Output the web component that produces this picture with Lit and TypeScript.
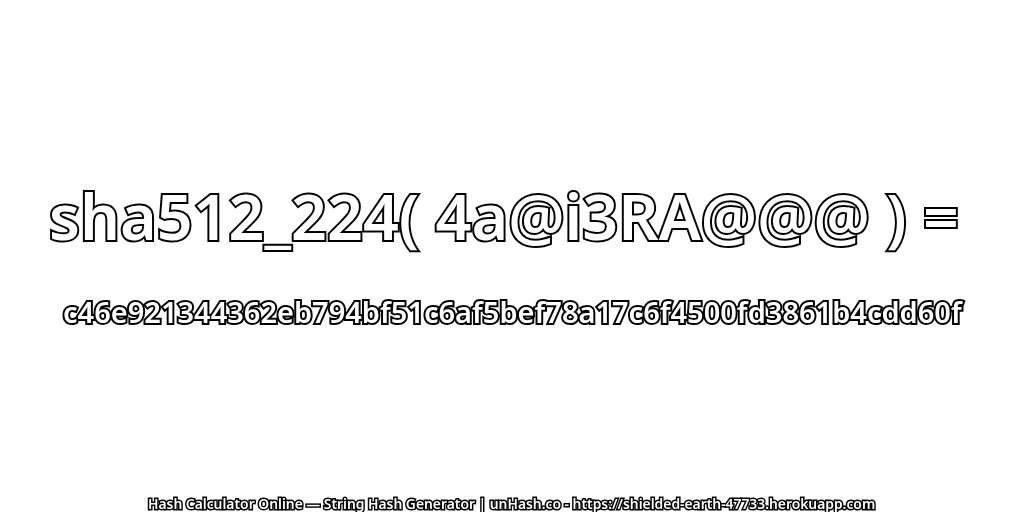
import { LitElement, html, css } from "lit";
import { customElement } from "lit/decorators.js";

@customElement("app-root")
export class AppRoot extends LitElement {
  static styles = css`
    :host { display: flex; flex-direction: column; align-items: center; width: 1024px; height: 512px; background: #fff; overflow: hidden; font-family: "Noto Sans", "Open Sans", sans-serif; font-weight: 600; color: #fff; }
    .t { paint-order: stroke fill; white-space: pre; will-change: transform; }
    .title { font-size: 62.8px; line-height: 76px; margin-top: 178px; -webkit-text-stroke: 4px #000; }
    .hash { font-size: 29px; line-height: 34px; margin-top: 41px; -webkit-text-stroke: 4px #000; }
    .foot { font-size: 13.85px; line-height: 16px; margin-top: auto; -webkit-text-stroke: 3px #000; }
  `;
  render() {
    return html`
      <div class="t title">sha512_224( 4a@i3RA@@@ ) = </div>
      <div class="t hash">c46e921344362eb794bf51c6af5bef78a17c6f4500fd3861b4cdd60f</div>
      <div class="t foot">Hash Calculator Online — String Hash Generator | unHash.co - https://shielded-earth-47733.herokuapp.com</div>
    `;
  }
}
